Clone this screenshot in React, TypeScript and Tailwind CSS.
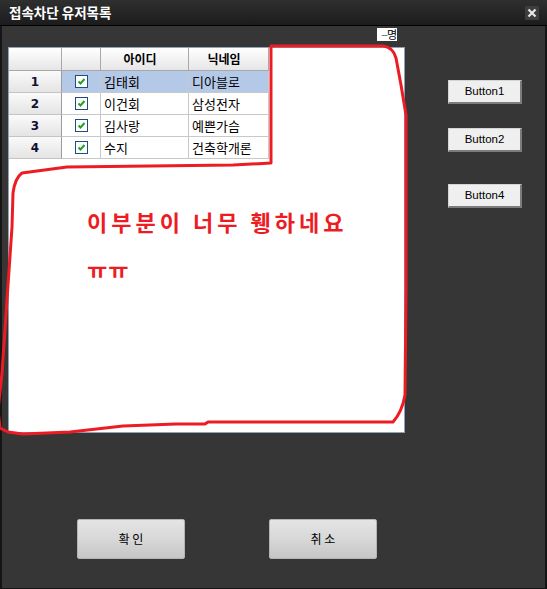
import React from "react";

const rows = [
  { n: "1", id: "김태회", nick: "디아블로", sel: true },
  { n: "2", id: "이건회", nick: "삼성전자", sel: false },
  { n: "3", id: "김사랑", nick: "예쁜가슴", sel: false },
  { n: "4", id: "수지", nick: "건축학개론", sel: false },
];

function Check() {
  return (
    <div className="w-[13px] h-[13px] border border-[#1d4f7e] bg-white flex items-center justify-center">
      <svg width="9" height="9" viewBox="0 0 9 9">
        <path d="M1.5 4.5 L3.5 6.5 L7.5 2" stroke="#22a022" strokeWidth="2" fill="none" />
      </svg>
    </div>
  );
}

function SideButton({ label, className = "" }: { label: string; className?: string }) {
  return (
    <div
      className={
        "w-[74px] h-[24px] bg-[#efefef] border-t border-l border-[#d4d4d4] border-b-2 border-r-2 border-b-[#7c7c7c] border-r-[#7c7c7c] flex items-center justify-center text-[11.5px] text-black " +
        className
      }
      style={{ fontFamily: '"Liberation Sans", Arial, sans-serif' }}
    >
      {label}
    </div>
  );
}

function BigButton({ label }: { label: string }) {
  return (
    <div className="w-[108px] h-[40px] rounded-[2px] border border-[#b4b4b4] bg-gradient-to-b from-[#e4e4e4] via-[#d8d8d8] to-[#c6c6c6] flex items-center justify-center text-[12px] text-black">
      {label}
    </div>
  );
}

export default function App() {
  return (
    <div
      className="relative w-[547px] h-[589px] bg-[#363636] flex flex-col overflow-hidden"
      style={{ fontFamily: '"Noto Sans CJK KR", "DejaVu Sans", sans-serif' }}
    >
      {/* title bar */}
      <div className="h-[26px] shrink-0 flex items-center justify-between bg-gradient-to-b from-[#2f2f2f] to-[#1c1c1c] border-b border-black pl-[9px] pr-[8px]">
        <span className="text-white font-bold text-[13.5px] leading-none">접속차단 유저목록</span>
        <div className="w-[14px] h-[14px] bg-[#3e3e3e] flex items-center justify-center">
          <svg width="10" height="10" viewBox="0 0 10 10">
            <path d="M1.5 1.5 L8.5 8.5 M8.5 1.5 L1.5 8.5" stroke="#e8e8e8" strokeWidth="2.2" />
          </svg>
        </div>
      </div>

      {/* body */}
      <div className="flex-1 flex flex-col border-l-2 border-r-2 border-b border-[#151515]">
        <div className="flex">
          <div className="ml-[6px] w-[397px] flex flex-col">
            <div className="h-[21px] flex items-start justify-end pr-[8px] pt-[2px]">
              <div className="bg-white h-[13px] w-[20px] flex items-center justify-end text-[11px] leading-none text-black">
                <span className="text-[#3060a0] tracking-[-1px]">--</span>
                <span>명</span>
              </div>
            </div>
            <div className="h-[386px] border border-[#8ea2ba] bg-white">
              <div className="grid grid-cols-[53px_39px_88px_80px] w-[260px] text-black">
                <div className="h-[23px] bg-gradient-to-b from-white to-[#e6e6e6] border-r border-b border-[#a8a8a8]" />
                <div className="h-[23px] bg-gradient-to-b from-white to-[#e6e6e6] border-r border-b border-[#a8a8a8]" />
                <div className="h-[23px] bg-gradient-to-b from-white to-[#e6e6e6] border-r border-b border-[#a8a8a8] flex items-center justify-center pr-[9px] text-[12px] font-bold">
                  아이디
                </div>
                <div className="h-[23px] bg-gradient-to-b from-white to-[#e6e6e6] border-r border-b border-[#a8a8a8] flex items-center justify-center pr-[9px] text-[12px] font-bold">
                  닉네임
                </div>
                {rows.map((r) => (
                  <React.Fragment key={r.n}>
                    <div
                      className="h-[22px] bg-gradient-to-b from-[#fafafa] to-[#e4e4e4] border-r border-r-[#9c9c9c] border-b border-b-[#c4c4c4] flex items-center justify-center text-[12px] font-bold text-[#101030]"
                      style={{ fontFamily: '"DejaVu Sans", sans-serif' }}
                    >
                      {r.n}
                    </div>
                    <div
                      className={
                        "h-[22px] border-r border-b border-[#c8c8c8] flex items-center justify-center pl-[1px] " +
                        (r.sel ? "bg-[#b4c9e7]" : "bg-white")
                      }
                    >
                      <Check />
                    </div>
                    <div
                      className={
                        "h-[22px] border-r border-b border-[#c8c8c8] flex items-center pl-[3px] text-[13px] " +
                        (r.sel ? "bg-[#b4c9e7]" : "bg-white")
                      }
                    >
                      {r.id}
                    </div>
                    <div
                      className={
                        "h-[22px] border-r border-b border-[#c8c8c8] flex items-center pl-[3px] text-[13px] " +
                        (r.sel ? "bg-[#b4c9e7]" : "bg-white")
                      }
                    >
                      {r.nick}
                    </div>
                  </React.Fragment>
                ))}
              </div>
              <div className="pl-[78px] mt-[49px] text-[#ed1c24] font-bold text-[22px] leading-[26px] tracking-[4px]">
                <div>이부분이 너무 휑하네요</div>
                <div className="mt-[21px] tracking-[1px]">ㅠㅠ</div>
              </div>
            </div>
          </div>
          <div className="ml-[43px] pt-[54px] flex flex-col">
            <SideButton label="Button1" />
            <SideButton label="Button2" className="mt-[24px]" />
            <SideButton label="Button4" className="mt-[32px]" />
          </div>
        </div>
        <div className="flex pl-[75px] mt-[86px] gap-[84px]">
          <BigButton label="확 인" />
          <BigButton label="취 소" />
        </div>
      </div>

      {/* red hand-drawn annotation */}
      <svg
        className="absolute left-0 top-0 pointer-events-none"
        width="547"
        height="589"
        viewBox="0 0 547 589"
      >
        <path
          d="M271 46 L383 46 Q393 47 396 58 L401 85 L406 115 L406 290 L405 395 Q402 412 393 422 L208 422 L205 424 L176 424 L123 426 L70 432 L23 434 L8 432 L0 428 L-2 410 L0 392 L2 373 L7 300 L12 227 L13 193 Q15 178 22 173 L67 167 L233 165 L271 163 Z"
          stroke="#ed1c24"
          strokeWidth="3"
          fill="none"
          strokeLinejoin="round"
        />
      </svg>
    </div>
  );
}
